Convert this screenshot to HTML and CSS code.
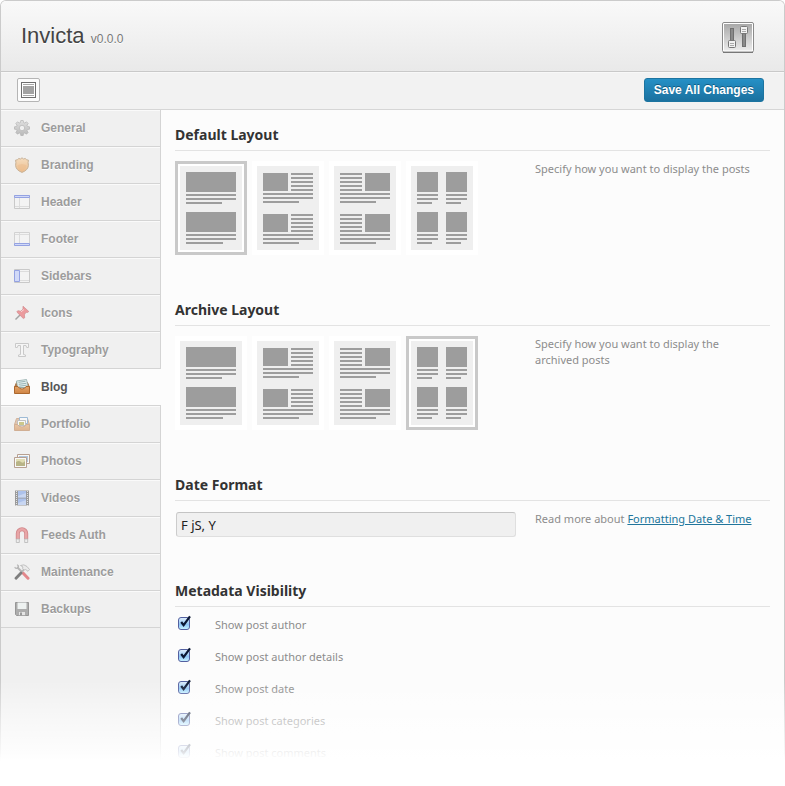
FILE: index.html
```html
<!DOCTYPE html>
<html lang="en">
<head>
<meta charset="utf-8">
<title>Invicta – Blog settings</title>
<link rel="stylesheet" href="styles.css">
</head>
<body>
<svg class="defs" aria-hidden="true">
  <defs>
    <linearGradient id="g-gear" x1="0" y1="0" x2="0" y2="1"><stop offset="0" stop-color="#d4d4d4"/><stop offset="1" stop-color="#8e8e8e"/></linearGradient>
    <linearGradient id="g-shield" x1="0" y1="0" x2="0" y2="1"><stop offset="0" stop-color="#fbd09a"/><stop offset="1" stop-color="#e8913a"/></linearGradient>
    <linearGradient id="g-tray" x1="0" y1="0" x2="0" y2="1"><stop offset="0" stop-color="#e3a468"/><stop offset="1" stop-color="#cf8444"/></linearGradient>
    <linearGradient id="g-knob" x1="0" y1="0" x2="0" y2="1"><stop offset="0" stop-color="#a9a9a9"/><stop offset="1" stop-color="#ebebeb"/></linearGradient>
    <symbol id="one-column" viewBox="0 0 62 84">
      <path d="M6 6h50v20H6zM6 28h50v2H6zM6 32h50v2H6zM6 36h36v2H6zM6 46h50v20H6zM6 68h50v2H6zM6 72h50v2H6zM6 76h37v2H6z"/>
    </symbol>
    <symbol id="image-left" viewBox="0 0 62 84">
      <path d="M6 7h25v18H6zM34 7h22v2H34zM34 11h22v2H34zM34 15h22v2H34zM34 19h22v2H34zM34 23h22v2H34zM6 27h50v2H6zM6 31h50v2H6zM6 35h36v2H6z"/>
      <path d="M6 48h25v18H6zM34 48h22v2H34zM34 52h22v2H34zM34 56h22v2H34zM34 60h22v2H34zM34 64h22v2H34zM6 68h50v2H6zM6 72h50v2H6zM6 76h36v2H6z"/>
    </symbol>
    <symbol id="image-right" viewBox="0 0 62 84">
      <path d="M31 7h25v18H31zM6 7h22v2H6zM6 11h22v2H6zM6 15h22v2H6zM6 19h22v2H6zM6 23h22v2H6zM6 27h50v2H6zM6 31h50v2H6zM6 35h36v2H6z"/>
      <path d="M31 48h25v18H31zM6 48h22v2H6zM6 52h22v2H6zM6 56h22v2H6zM6 60h22v2H6zM6 64h22v2H6zM6 68h50v2H6zM6 72h50v2H6zM6 76h36v2H6z"/>
    </symbol>
    <symbol id="two-columns" viewBox="0 0 62 84">
      <path d="M6 6h21v20H6zM6 28h21v2H6zM6 32h21v2H6zM6 36h15v2H6zM6 46h21v20H6zM6 68h21v2H6zM6 72h21v2H6zM6 76h15v2H6z"/>
      <path d="M35 6h21v20H35zM35 28h21v2H35zM35 32h21v2H35zM35 36h15v2H35zM35 46h21v20H35zM35 68h21v2H35zM35 72h21v2H35zM35 76h15v2H35z"/>
    </symbol>
    <symbol id="check" viewBox="0 0 14 14">
      <path d="M3.200 7 5.600 10.200 12 1.400" fill="none" stroke="#0b1733" stroke-width="2.200"/>
    </symbol>
  </defs>
</svg>

<div class="panel">
  <header class="top">
    <h1 class="brand">Invicta <small class="version">v0.0.0</small></h1>
    <svg class="sliders" viewBox="0 0 32 31" role="img" aria-label="Options">
      <rect x=".5" y=".5" width="31" height="29.500" rx="1.500" fill="#fff" stroke="#8a8a8a"/>
      <path d="M1 30.500h30" stroke="#777"/>
      <rect x="2" y="2" width="28" height="26.500" fill="url(#g-knob)"/>
      <rect x="8.500" y="6.500" width="3" height="14" fill="#8a8a8a" stroke="#707070"/>
      <rect x="20.500" y="10.500" width="3" height="14" fill="#8a8a8a" stroke="#707070"/>
      <rect x="6.500" y="18.500" width="7" height="7" rx="1" fill="#f2f2f2" stroke="#777"/>
      <rect x="18.500" y="4.500" width="7" height="7" rx="1" fill="#f2f2f2" stroke="#777"/>
      <path d="M8 21.500h4M8 23.500h4M20 7.500h4M20 9.500h4" stroke="#aaa"/>
    </svg>
  </header>

  <div class="toolbar">
    <button class="expand" type="button" aria-label="Expand options">
      <svg viewBox="0 0 15 16" aria-hidden="true">
        <rect x=".5" y=".5" width="14" height="15" fill="#fff" stroke="#6f6f6f"/>
        <path d="M2 2.500h11M2 13.500h11" stroke="#a8a8a8"/>
        <rect x="2" y="4" width="11" height="8" fill="#a3a3a3"/>
      </svg>
    </button>
    <button class="save" type="button">Save All Changes</button>
  </div>

  <div class="columns">
    <nav class="menu" aria-label="Settings sections">
      <a class="item" href="#general"><svg class="icon" viewBox="0 0 16 16"><g fill="url(#g-gear)" stroke="#777" stroke-width=".6"><path fill-rule="evenodd" d="M6.800.5h2.400l.4 2 1.200.5 1.700-1.200 1.700 1.700L13 5.200l.5 1.200 2 .4v2.400l-2 .4-.5 1.200 1.200 1.700-1.700 1.700-1.700-1.200-1.200.5-.4 2H6.800l-.4-2-1.200-.5-1.700 1.200-1.700-1.700L3 10.800l-.5-1.200-2-.4V6.800l2-.4L3 5.200 1.800 3.500l1.700-1.700L5.200 3l1.200-.5zM8 5.300a2.700 2.700 0 1 0 0 5.400 2.700 2.700 0 0 0 0-5.400z"/></g></svg>General</a>
      <a class="item" href="#branding"><svg class="icon" viewBox="0 0 16 16"><path d="M1.500 3.200Q3.500 3.200 4.800 1.500 6.500 2.800 8 .8 9.500 2.800 11.200 1.500 12.500 3.200 14.500 3.200 13.700 5 14.400 8.500 14 13.200 8 15.400 2 13.200 1.600 8.500 2.300 5 1.500 3.200z" fill="url(#g-shield)" stroke="#a88050"/><path d="M3.500 8.500Q8 5.500 12.600 8.500 12 12.500 8 14 4 12.500 3.500 8.500z" fill="#e9943e" opacity=".5"/></svg>Branding</a>
      <a class="item" href="#header"><svg class="icon" viewBox="0 0 16 16"><path d="M.5 1.500h15v13H.5z" fill="#f6f6f6" stroke="#aaa"/><path d="M5.500 4v10M1 12.500h14" stroke="#ccc"/><path d="M.5 1.500h15v2H.5z" fill="#b9c8ff" stroke="#4a63d8"/></svg>Header</a>
      <a class="item" href="#footer"><svg class="icon" viewBox="0 0 16 16"><path d="M.5 1.500h15v13H.5z" fill="#f6f6f6" stroke="#bbb"/><path d="M5.500 2v10M1 3.500h14" stroke="#ccc"/><path d="M.5 12.500h15v2H.5z" fill="#b9c8ff" stroke="#4a63d8"/></svg>Footer</a>
      <a class="item" href="#sidebars"><svg class="icon" viewBox="0 0 16 16"><path d="M.5 1.500h15v13H.5z" fill="#f6f6f6" stroke="#aaa"/><path d="M6 3.500h9M6 12.500h9" stroke="#ccc"/><path d="M.5 2.500h5v11h-5z" fill="#b9c8ff" stroke="#4a63d8"/></svg>Sidebars</a>
      <a class="item" href="#icons"><svg class="icon" viewBox="0 0 16 16"><path d="M6.500 9.500 1.500 14.500" stroke="#666" stroke-width="1.500"/><path d="m9 1.200 5.800 5.300-1.300 1-1.500-.3-1.600 2.600.3 3-1.400.7L2.800 7l1-1.300 2.800.5 2.400-1.900z" fill="#e8555a" stroke="#b8383e" stroke-width=".7"/><path d="m7 6.800 3-2.300" stroke="#ffc0c0"/></svg>Icons</a>
      <a class="item" href="#typography"><svg class="icon" viewBox="0 0 16 16"><path d="M1.500 1.500h13v4h-1.800l-.7-2H9.500v9l2 .5v1.500h-7V13l2-.5v-9H4l-.7 2H1.500z" fill="#fafafa" stroke="#aaa"/></svg>Typography</a>
      <a class="item active" href="#blog" aria-current="page"><svg class="icon" viewBox="0 0 16 16"><path d="M.5 8.500 2.500 3.500h11l2 5z" fill="#b0733e" stroke="#a8703f"/><path d="m2.500 2 10-1.500 1.800 8H3.500z" fill="#e3f0ee" stroke="#8ea9a8" stroke-width=".8"/><path d="m4.500 3.300 7-1M4.800 5.300l7.500-1M5.200 7.200l7.500-1" stroke="#86a3a6" stroke-width=".8"/><path d="M.5 7.500h3.500q1 2.500 4 2.500t4-2.500h3.500v7H.5z" fill="url(#g-tray)" stroke="#ab682f"/></svg>Blog</a>
      <a class="item" href="#portfolio"><svg class="icon" viewBox="0 0 16 16"><path d="M.5 8.500 2.500 2.500h11l2 6z" fill="#d7a57a" stroke="#b98358"/><path d="M5.500 1.500h8v6h-8z" fill="#fff" stroke="#5b8fc0"/><path d="M3.500 4.500h8v5h-8z" fill="#fff" stroke="#999"/><path d="M5 6h5v3H5z" fill="#b0a637"/><path d="M.5 8.500h3q1 2.500 4.500 2.500t4.500-2.500h3v6H.5z" fill="url(#g-tray)" stroke="#b97a4a"/></svg>Portfolio</a>
      <a class="item" href="#photos"><svg class="icon" viewBox="0 0 16 16"><path d="M3.500 1.500h12v9h-12z" fill="#fff" stroke="#8a5f45"/><path d="M5 3h9v6H5z" fill="#7aa5cf"/><path d="M.5 4.500h12v10H.5z" fill="#fff" stroke="#8a5f45"/><path d="M2 6h9v4H2z" fill="#d4cf83"/><path d="M2 9q3-2 5 0t4-1v5H2z" fill="#8b8432"/></svg>Photos</a>
      <a class="item" href="#videos"><svg class="icon" viewBox="0 0 16 16"><path d="M1 .5h14v15H1z" fill="#555"/><path d="M4 1h8v6.500H4zM4 8.500h8V15H4z" fill="#779ee8"/><path d="m4 6 8-3v4.500H4zm0 7 8-3v5H4z" fill="#a9c2f3"/><path d="M2.500 1v15M13.500 1v15" stroke="#ddd" stroke-dasharray="1 1"/></svg>Videos</a>
      <a class="item" href="#feeds"><svg class="icon" viewBox="0 0 16 16"><path d="M3.800 12V6.500a4.200 4.200 0 0 1 8.400 0V12" fill="none" stroke="#b8343a" stroke-width="4"/><path d="M3.800 12V6.500a4.200 4.200 0 0 1 8.400 0V12" fill="none" stroke="#e2686b" stroke-width="2.400"/><path d="M2.300 12h3v3.500h-3zM10.700 12h3v3.500h-3z" fill="#eee" stroke="#888" stroke-width=".8"/></svg>Feeds Auth</a>
      <a class="item" href="#maintenance"><svg class="icon" viewBox="0 0 16 16"><path d="m3 3 6 6" stroke="#8a8a8a" stroke-width="2"/><path d="M.6 3.200 2 4.500 4.300 4.300 4.500 2 3.200.6" fill="none" stroke="#8a8a8a" stroke-width="1.200"/><path d="m9 9 5 5.200" stroke="#d8323a" stroke-width="3" stroke-linecap="round"/><path d="m11 4-4 5" stroke="#888" stroke-width="1.800"/><path d="m7 9-5 5.300" stroke="#222" stroke-width="2.800" stroke-linecap="round"/><path d="M6.500 1.500Q10-.3 13 2.500l2.500 3-1.500 1.800-2.300-1.800-1.500.5-1.700-1.700L9 3Z" fill="#e6e6e6" stroke="#888" stroke-width=".8"/></svg>Maintenance</a>
      <a class="item" href="#backups"><svg class="icon" viewBox="0 0 16 16"><path d="M1.500 1.500h13v13h-12l-1-1z" fill="#777" stroke="#4d4d4d"/><path d="M3.500 1.500h9v6.500h-9z" fill="#edf4f3"/><path d="M4.500 10.500h7v4h-7z" fill="#ddd" stroke="#555" stroke-width=".6"/><path d="M6 11.500h2v3H6z" fill="#555"/></svg>Backups</a>
    </nav>

    <main class="content">
      <section class="section">
        <h2 class="heading">Default Layout</h2>
        <div class="row">
          <div class="thumbs" role="radiogroup" aria-label="Default Layout">
            <label class="thumb"><input type="radio" name="default" aria-label="One column" checked><svg><use href="#one-column"/></svg></label>
            <label class="thumb"><input type="radio" name="default" aria-label="Image left"><svg><use href="#image-left"/></svg></label>
            <label class="thumb"><input type="radio" name="default" aria-label="Image right"><svg><use href="#image-right"/></svg></label>
            <label class="thumb"><input type="radio" name="default" aria-label="Two columns"><svg><use href="#two-columns"/></svg></label>
          </div>
          <p class="hint">Specify how you want to display the posts</p>
        </div>
      </section>

      <section class="section">
        <h2 class="heading">Archive Layout</h2>
        <div class="row">
          <div class="thumbs" role="radiogroup" aria-label="Archive Layout">
            <label class="thumb"><input type="radio" name="archive" aria-label="One column"><svg><use href="#one-column"/></svg></label>
            <label class="thumb"><input type="radio" name="archive" aria-label="Image left"><svg><use href="#image-left"/></svg></label>
            <label class="thumb"><input type="radio" name="archive" aria-label="Image right"><svg><use href="#image-right"/></svg></label>
            <label class="thumb"><input type="radio" name="archive" aria-label="Two columns" checked><svg><use href="#two-columns"/></svg></label>
          </div>
          <p class="hint">Specify how you want to display the archived posts</p>
        </div>
      </section>

      <section class="section">
        <h2 class="heading"><label for="date-format">Date Format</label></h2>
        <div class="row">
          <input class="text" id="date-format" type="text" value="F jS, Y">
          <p class="hint">Read more about <a href="#format">Formatting Date &amp; Time</a></p>
        </div>
      </section>

      <section class="section">
        <h2 class="heading">Metadata Visibility</h2>
        <div class="options">
          <label class="option"><span class="box"><input type="checkbox" checked><svg><use href="#check"/></svg></span>Show post author</label>
          <label class="option"><span class="box"><input type="checkbox" checked><svg><use href="#check"/></svg></span>Show post author details</label>
          <label class="option"><span class="box"><input type="checkbox" checked><svg><use href="#check"/></svg></span>Show post date</label>
          <label class="option"><span class="box"><input type="checkbox" checked><svg><use href="#check"/></svg></span>Show post categories</label>
          <label class="option"><span class="box"><input type="checkbox" checked><svg><use href="#check"/></svg></span>Show post comments</label>
        </div>
      </section>
    </main>
  </div>
</div>
<div class="fade"></div>
</body>
</html>
```
FILE: styles.css
```css
* { box-sizing: border-box; }

body {
  position: relative;
  margin: 0;
  background: #fff;
  color: #333;
  font-family: "Noto Sans", "Open Sans", sans-serif;
  font-size: 11px;
  line-height: 16px;
}

h1, h2, p { margin: 0; }

.defs {
  position: absolute;
  width: 0;
  height: 0;
}

.panel {
  display: flex;
  flex-direction: column;
  height: 100vh;
  overflow: hidden;
  border: 1px solid #cbcbcb;
  border-bottom: 0;
  border-radius: 6px 6px 0 0;
}

.top {
  display: flex;
  flex: none;
  align-items: center;
  justify-content: space-between;
  height: 71px;
  padding: 2px 30px 0 20px;
  border-bottom: 1px solid #c9c9c9;
  background: linear-gradient(#f9f9f9, #e9e9e9);
}

.brand {
  color: #444;
  font: 22px/32px "Liberation Sans", Arial, sans-serif;
  text-shadow: 0 1px 0 #fff;
}

.version {
  color: #777;
  font-size: 12px;
}

.sliders {
  width: 32px;
  height: 31px;
}

.toolbar {
  display: flex;
  flex: none;
  align-items: center;
  justify-content: space-between;
  height: 38px;
  padding: 0 20px 2px 16px;
  border-top: 1px solid #f8f8f8;
  border-bottom: 1px solid #d6d6d6;
  background: #f2f2f2;
}

.expand {
  display: grid;
  place-items: center;
  width: 23px;
  height: 24px;
  padding: 0;
  border: 1px solid #b5b5b5;
  border-radius: 2px;
  background: #fcfcfc;
}

.expand svg {
  width: 15px;
  height: 16px;
}

.save {
  height: 24px;
  padding: 0 9px;
  border: 1px solid #1c74a0;
  border-radius: 3px;
  background: linear-gradient(#2590c6, #1b719f);
  color: #fff;
  font: bold 12px/20px "Liberation Sans", Arial, sans-serif;
  text-shadow: 0 -1px 0 #125a80;
}

.columns {
  display: flex;
  flex: 1;
}

.menu {
  flex: none;
  width: 160px;
  border-right: 1px solid #d4d4d4;
  background: #f0f0f0;
}

.item {
  display: flex;
  align-items: center;
  gap: 11px;
  height: 37px;
  padding-left: 13px;
  border-bottom: 1px solid #d4d4d4;
  box-shadow: inset 0 1px 0 #fafafa;
  color: #9c9c9c;
  font: bold 12px/16px "Liberation Sans", Arial, sans-serif;
  text-decoration: none;
  text-shadow: 0 1px 0 #fff;
}

.icon {
  width: 16px;
  height: 16px;
  opacity: .55;
}

.active {
  margin-right: -1px;
  background: #fcfcfc;
  box-shadow: none;
  color: #555;
}

.active .icon { opacity: 1; }

.content {
  flex: 1;
  padding: 15px 14px;
  background: #fcfcfc;
}

.section { margin-bottom: 45px; }

.heading {
  padding-bottom: 5px;
  border-bottom: 1px solid #e3e3e3;
  font-size: 14px;
  line-height: 20px;
}

.row {
  display: grid;
  grid-template-columns: 1fr 235px;
  gap: 18px;
  align-items: start;
  padding-top: 10px;
}

.thumbs {
  display: flex;
  gap: 5px;
}

.thumb {
  position: relative;
  padding: 2px;
  border: 3px solid #fff;
  background: #fff;
}

.thumb input {
  position: absolute;
  margin: 0;
  opacity: 0;
}

.thumb:has(:checked) { border-color: #c9c9c9; }

.thumb svg {
  display: block;
  width: 62px;
  height: 84px;
  background: #efefef;
  fill: #9d9d9d;
}

.hint {
  padding-right: 10px;
  color: #8c8c8c;
}

.hint a { color: #21759b; }

.text {
  width: calc(100% - 2px);
  height: 25px;
  margin: 1px 0 0 1px;
  padding: 0 4px;
  border: 1px solid #dfdfdf;
  border-top-color: #c4c4c4;
  border-left-color: #ccc;
  border-radius: 3px;
  background: #f0f0f0;
  color: #222;
  font: 13px/16px "Noto Sans", "Open Sans", sans-serif;
}

.row:has(.text) { margin-bottom: -1px; }

.options {
  display: grid;
  gap: 16px;
  justify-items: start;
  padding-top: 10px;
}

.option {
  display: flex;
  gap: 24px;
  height: 16px;
  padding-left: 3px;
  color: #8c8c8c;
}

.box {
  position: relative;
  width: 13px;
  height: 13px;
}

.box input {
  display: block;
  width: 12px;
  height: 13px;
  margin: 0;
  appearance: none;
  border: 1px solid #5360a0;
  border-radius: 3px;
  background: linear-gradient(#dcecfb, #8fc6f6 60%, #c6f0ff);
}

.box svg {
  position: absolute;
  top: -2px;
  left: 0;
  width: 14px;
  height: 14px;
}

.fade {
  position: absolute;
  inset: auto 0 0;
  height: 106px;
  background: linear-gradient(rgba(255, 255, 255, 0), rgba(255, 255, 255, .5) 36%, rgba(255, 255, 255, .84) 66%, #fff 76%);
  pointer-events: none;
}
```
